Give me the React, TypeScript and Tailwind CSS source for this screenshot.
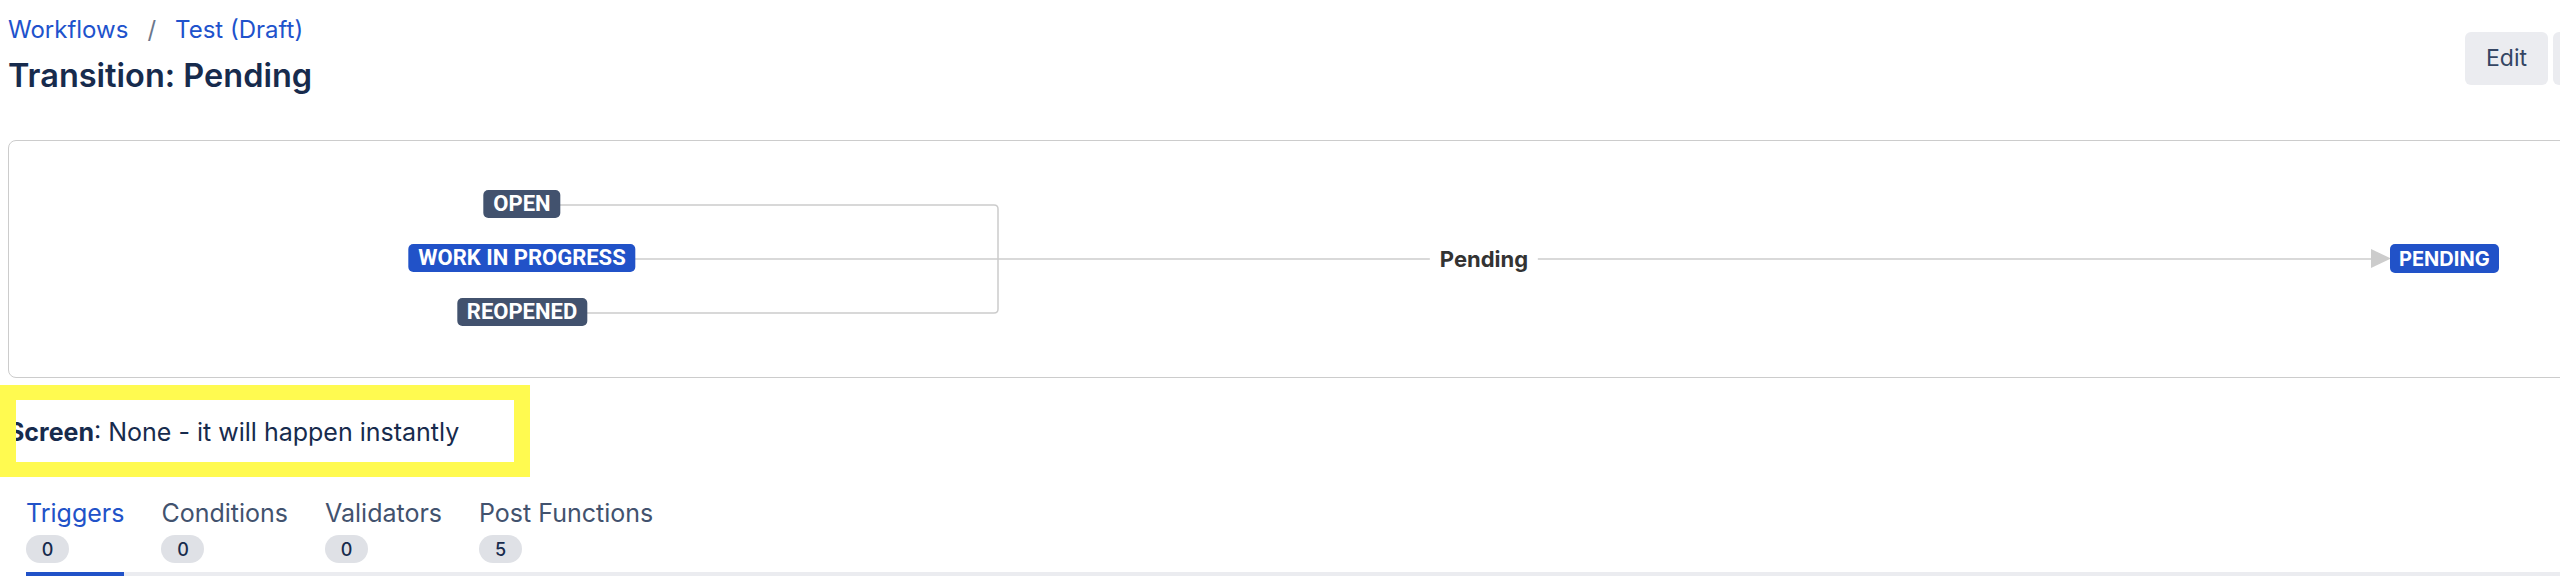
import React from 'react';

const tabs = [
  { label: 'Triggers', count: 0, active: true },
  { label: 'Conditions', count: 0, active: false },
  { label: 'Validators', count: 0, active: false },
  { label: 'Post Functions', count: 5, active: false },
];

const sourceStatuses = [
  { label: 'OPEN', className: 'bg-[#42526E]' },
  { label: 'WORK IN PROGRESS', className: 'bg-[#2152C8]' },
  { label: 'REOPENED', className: 'bg-[#42526E]' },
];

const TransitionDiagram: React.FC = () => {
  return (
    <div className="relative ml-2 h-[238px] w-[2600px] rounded-lg border border-[#CCCCCC] bg-white">
      <svg className="absolute inset-0" width="2600" height="236">
        <g fill="none" stroke="#CCCCCC" strokeWidth="1.5">
          <path d="M513 64 H985 Q989 64 989 68 V168 Q989 172 985 172 H513" />
          <path d="M513 118 H2363" />
        </g>
        <polygon points="2362,108 2382,117.5 2362,127" fill="#CCCCCC" />
      </svg>

      <div className="absolute left-[513px] top-[49px] flex -translate-x-1/2 flex-col items-center gap-[26px]">
        {sourceStatuses.map((s) => (
          <span
            key={s.label}
            className={`flex h-[28px] items-center rounded-[5px] px-[10px] font-['Roboto',sans-serif] text-[22px] font-bold leading-none text-white ${s.className}`}
          >
            {s.label}
          </span>
        ))}
      </div>

      <span className="absolute left-[1475px] top-[118px] -translate-x-1/2 -translate-y-1/2 bg-white px-[10px] text-[22px] font-bold leading-7 text-[#333333]">
        Pending
      </span>

      <span className="absolute left-[2381px] top-[103px] flex h-[29px] items-center rounded-[5px] bg-[#2152C8] px-[9px] text-[20px] font-bold leading-none text-white">
        PENDING
      </span>
    </div>
  );
};

export default function App() {
  return (
    <div className="relative h-[576px] w-full overflow-hidden bg-white font-['Inter',sans-serif] text-[#172B4D]">
      <header className="flex items-start justify-between pl-2 pt-4">
        <div>
          <nav className="flex h-7 items-center text-[24px] leading-7">
            <a className="text-[#2052CC]">Workflows</a>
            <span className="mx-[19px] text-[#6B778C]">/</span>
            <a className="text-[#2052CC]">Test (Draft)</a>
          </nav>
          <h1 className="mt-3 text-[32.5px] font-semibold leading-10 text-[#172B4D]">Transition: Pending</h1>
        </div>
        <div className="mr-[-53px] mt-4 flex gap-[5px]">
          <button className="h-[53px] w-[83px] rounded-[6px] bg-[#EBECF0] text-[23px] text-[#344563]">Edit</button>
          <button aria-label="More actions" className="h-[53px] w-[60px] rounded-[6px] bg-[#EBECF0]" />
        </div>
      </header>

      <div className="mt-[44px]">
        <TransitionDiagram />
      </div>

      <p className="mt-[38px] pl-2 text-[25px] leading-8 text-[#172B4D]">
        <span className="font-bold">Screen</span>: None - it will happen instantly
      </p>

      <nav className="ml-[26px] mt-[51px] flex gap-[37px] border-b-4 border-[#EBECF0]">
        {tabs.map((t) => (
          <div
            key={t.label}
            className={`-mb-1 flex flex-col items-start pb-[9px] ${t.active ? 'border-b-4 border-[#2152C8]' : 'border-b-4 border-transparent'}`}
          >
            <span className={`text-[25px] leading-7 ${t.active ? 'text-[#2152C8]' : 'text-[#42526E]'}`}>
              {t.label}
            </span>
            <span className="mt-2 flex h-7 w-[43px] items-center justify-center rounded-full bg-[#DFE1E6] text-[18px] font-medium text-[#172B4D]">
              {t.count}
            </span>
          </div>
        ))}
      </nav>

      <div className="pointer-events-none absolute left-0 top-[385px] h-[92px] w-[530px] border-x-[16px] border-y-[15px] border-[#FFFA50]" />
    </div>
  );
}
